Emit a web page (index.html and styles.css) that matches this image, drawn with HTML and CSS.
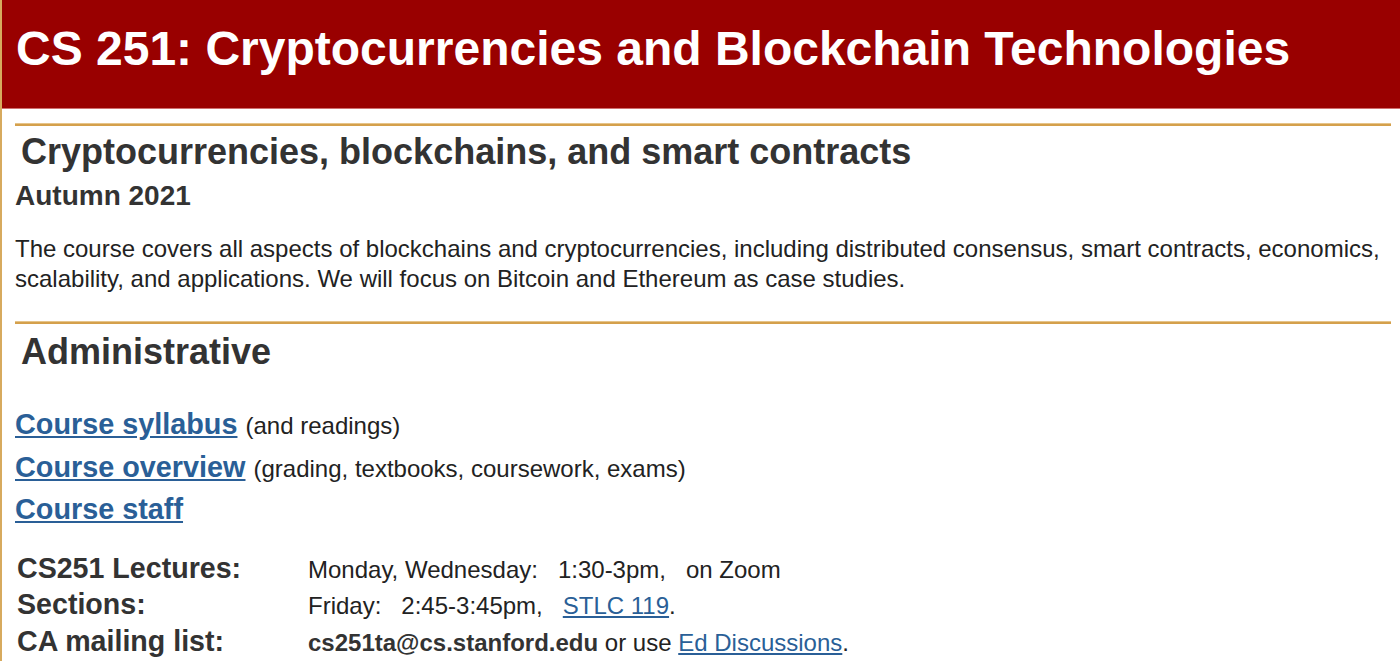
FILE: index.html
```html
<!DOCTYPE html>
<html lang="en">
<head>
<meta charset="utf-8">
<title>CS 251: Cryptocurrencies and Blockchain Technologies</title>
<link rel="stylesheet" href="styles.css">
</head>
<body>
<div class="page">
  <header class="masthead">
    <h1>CS 251: Cryptocurrencies and Blockchain Technologies</h1>
  </header>

  <main class="content">
    <section class="block">
      <hr class="rule">
      <h2>Cryptocurrencies, blockchains, and smart contracts</h2>
      <h3>Autumn 2021</h3>
      <p class="intro">The course covers all aspects of blockchains and cryptocurrencies, including distributed consensus, smart contracts, economics, scalability, and applications. We will focus on Bitcoin and Ethereum as case studies.</p>
    </section>

    <section class="block">
      <hr class="rule">
      <h2>Administrative</h2>
      <ul class="links">
        <li><a href="#">Course syllabus</a> <span class="note">(and readings)</span></li>
        <li><a href="#">Course overview</a> <span class="note">(grading, textbooks, coursework, exams)</span></li>
        <li><a href="#">Course staff</a></li>
      </ul>

      <dl class="info">
        <dt>CS251 Lectures:</dt>
        <dd>Monday, Wednesday:&nbsp;&nbsp; 1:30-3pm,&nbsp;&nbsp; on Zoom</dd>
        <dt>Sections:</dt>
        <dd>Friday:&nbsp;&nbsp; 2:45-3:45pm,&nbsp;&nbsp; <a href="#">STLC 119</a>.</dd>
        <dt>CA mailing list:</dt>
        <dd><b>cs251ta@cs.stanford.edu</b> or use <a href="#">Ed Discussions</a>.</dd>
      </dl>
    </section>
  </main>
</div>
</body>
</html>
```

FILE: styles.css
```css
html, body {
  margin: 0;
  padding: 0;
  background: #ffffff;
}

body {
  font-family: "Liberation Sans", Arial, Helvetica, sans-serif;
  color: #222222;
}

.page {
  border-left: 2px solid #d7aa5e;
  min-height: 100vh;
}

/* Title bar */
.masthead {
  background: #990000;
  height: 109px;
  box-sizing: border-box;
  padding: 25px 0 0 14px;
  border-bottom: 1px solid #cf6f6f;
}

.masthead h1 {
  margin: 0;
  font-size: 48px;
  line-height: 48px;
  font-weight: bold;
  color: #ffffff;
}

/* Body */
.content {
  padding: 0 9px 0 13px;
}

.rule {
  margin: 0;
  border: 0;
  height: 3px;
  background: #d4a04c;
  border-top: 1px solid #e6c48a;
  box-sizing: border-box;
}

.block:first-child .rule {
  margin-top: 14px;
}

h2 {
  margin: 6px 0 0;
  padding-left: 6px;
  font-size: 36px;
  line-height: 40px;
  font-weight: bold;
  color: #333333;
}

.block + .block h2 {
  margin-top: 8px;
}

h3 {
  margin: 8px 0 0;
  font-size: 28px;
  line-height: 32px;
  font-weight: bold;
  color: #333333;
}

.intro {
  margin: 22px 0 27px;
  font-size: 24px;
  line-height: 30px;
}

a {
  color: #2a5f97;
}

.links {
  list-style: none;
  margin: 31px 0 0;
  padding: 0;
}

.links li {
  font-size: 28.8px;
  line-height: 42.5px;
}

.links a {
  font-weight: bold;
}

.links .note {
  font-size: 24px;
  line-height: 1;
}

.info {
  display: grid;
  grid-template-columns: 291px 1fr;
  grid-auto-rows: 36.5px;
  align-items: baseline;
  margin: 19px 0 0;
  padding-left: 2px;
}

.info dt {
  font-size: 28.6px;
  line-height: 36.5px;
  font-weight: bold;
  color: #333333;
}

.info dd {
  margin: 0;
  font-size: 24px;
  line-height: 36.5px;
}

.info dd b {
  color: #333333;
}
```
